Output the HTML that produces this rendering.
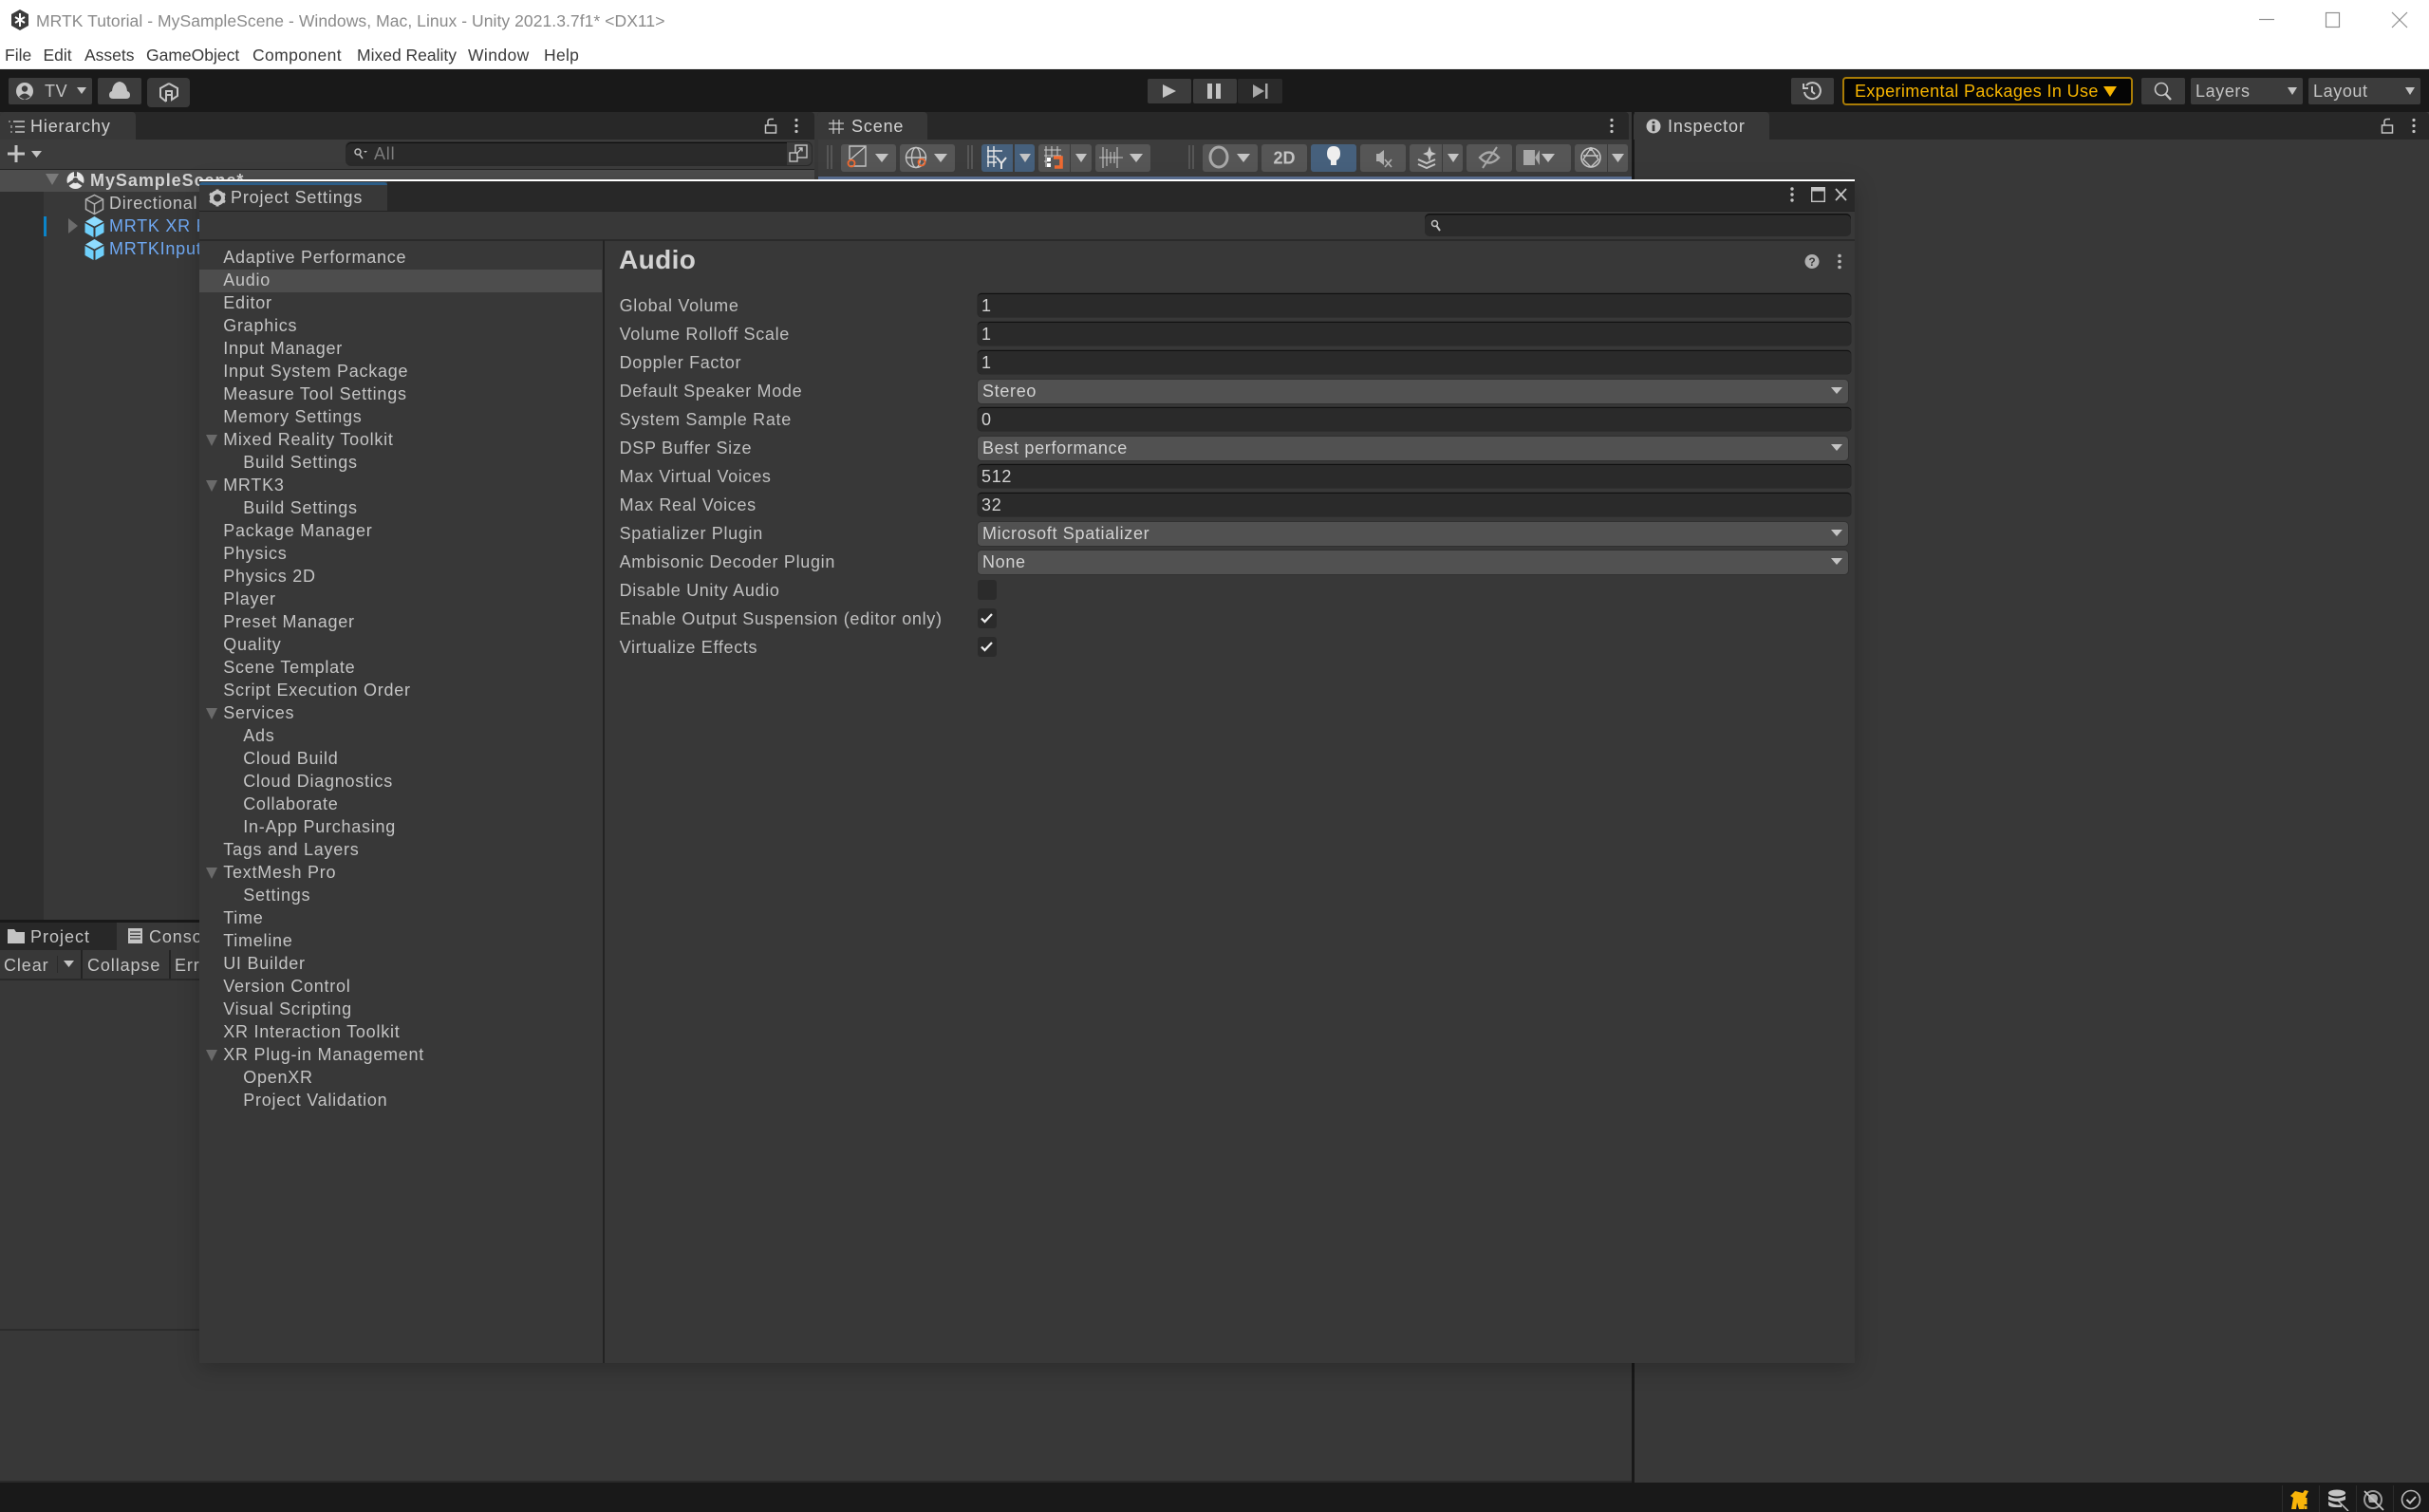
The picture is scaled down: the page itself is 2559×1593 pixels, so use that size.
<!DOCTYPE html>
<html><head><meta charset="utf-8"><title>Unity</title>
<style>
html,body{margin:0;padding:0;background:#383838}
#r{position:relative;width:2559px;height:1593px;overflow:hidden;background:#383838;font-family:"Liberation Sans",sans-serif;font-size:18px;color:#c4c4c4}
#r div,#r svg{position:absolute}
.t{white-space:nowrap;line-height:24px;letter-spacing:.75px}
.m{white-space:nowrap;line-height:24px;color:#3a3a3a;font-size:17.5px;top:46px}
.b{background:#3c3c3c;border-radius:2px;top:82px;height:28px}
.s{background:#565656;border-radius:3px;top:152px;height:29px}
.u{background:#46607c}
.g{top:153px;width:2px;height:25px;background:#565656;box-shadow:4px 0 0 #565656}
.i{left:235.2px}.c{left:256.2px}
.f{left:1030px;width:920px;height:25px;background:#2a2a2a;border-top:1.5px solid #111;border-radius:4px;box-sizing:border-box;box-shadow:0 0 0 .5px #262626}
.d{left:1030px;width:917px;height:25px;background:#515151;border-radius:4px;box-shadow:0 0 0 1px #303030}
.v{left:1034px;color:#d2d2d2;letter-spacing:.68px}
.l{left:652.6px;color:#c0c0c0;letter-spacing:.68px}
.k{left:1030px;width:20px;height:21px;background:#2b2b2b;border-radius:3px}
</style></head><body>
<div id="r">
<!-- title bar -->
<div style="left:0;top:0;width:2559px;height:72px;background:#fff"></div>
<div style="left:0;top:72px;width:2559px;height:1px;background:#f0f0f0"></div>
<svg style="left:10px;top:9px" width="22" height="24" viewBox="0 0 22 24"><path d="M11 1L20 6V18L11 23L2 18V6Z" fill="#3c3c3c"/><path d="M11 5V19M6 9L16 15M16 9L6 15" stroke="#fff" stroke-width="2"/></svg>
<div class="t" style="left:38px;top:10px;color:#8a8a8a;font-size:17.5px;letter-spacing:.06px">MRTK Tutorial - MySampleScene - Windows, Mac, Linux - Unity 2021.3.7f1* &lt;DX11&gt;</div>
<div class="m" style="left:5px">File</div><div class="m" style="left:45.5px">Edit</div><div class="m" style="left:89px">Assets</div><div class="m" style="left:154px">GameObject</div><div class="m" style="left:266px;letter-spacing:.4px">Component</div><div class="m" style="left:376px">Mixed Reality</div><div class="m" style="left:493px;letter-spacing:.4px">Window</div><div class="m" style="left:573px;letter-spacing:.3px">Help</div>
<svg style="left:2370px;top:8px" width="175" height="26" viewBox="0 0 175 26" fill="none" stroke="#8f8f8f" stroke-width="1.2"><path d="M10 12.5H26"/><rect x="80.5" y="5.5" width="14" height="15"/><path d="M150 5L166 21M166 5L150 21"/></svg>
<!-- main toolbar -->
<div style="left:0;top:73px;width:2559px;height:45px;background:#191919"></div>
<div class="b" style="left:9px;width:88px"></div>
<svg style="left:16px;top:86px" width="80" height="20" viewBox="0 0 80 20"><circle cx="10" cy="10" r="9" fill="#c4c4c4"/><circle cx="10" cy="7.5" r="3.2" fill="#3c3c3c"/><path d="M4 16Q10 9 16 16L10 19Z" fill="#3c3c3c"/><path d="M65 6H75L70 13Z" fill="#c4c4c4"/></svg>
<div class="t" style="left:47px;top:84px;color:#c4c4c4;letter-spacing:.6px">TV</div>
<div class="b" style="left:103px;width:46px"></div>
<svg style="left:114px;top:85px" width="24" height="20" viewBox="0 0 24 20"><path d="M5 19Q1 19 1 15Q1 12 4 11Q5 2 12 1Q19 2 20 11Q23 12 23 15Q23 19 19 19Z" fill="#c4c4c4"/></svg>
<div class="b" style="left:155px;width:45px;height:31px;border-radius:4px;background:#3a3a3a"></div>
<svg style="left:167px;top:86px" width="22" height="24" viewBox="0 0 22 24" fill="none" stroke="#c4c4c4" stroke-width="2"><path d="M11 2L20 7V15L14 19V13M8 21L2 16V7L11 2"/><path d="M8 21V10H14V14H8"/></svg>
<div class="b" style="left:1209px;width:46px;top:83px;height:26px"></div>
<div class="b" style="left:1257px;width:46px;top:83px;height:26px"></div>
<div class="b" style="left:1304px;width:47px;top:83px;height:26px;background:#2a2a2a"></div>
<svg style="left:1220px;top:86px" width="125" height="20" viewBox="0 0 125 20" fill="#c4c4c4"><path d="M5 3L19 10L5 17Z"/><rect x="52" y="2" width="5" height="16"/><rect x="61" y="2" width="5" height="16"/><path d="M100 3L112 10L100 17Z" fill="#a8a8a8"/><rect x="113" y="2" width="2.5" height="16" fill="#a8a8a8"/></svg>
<div class="b" style="left:1887px;width:45px"></div>
<svg style="left:1898px;top:85px" width="22" height="22" viewBox="0 0 22 22" fill="none" stroke="#c4c4c4" stroke-width="2"><path d="M5 5A8.5 8.5 0 1 1 3 12"/><path d="M2 3V8H7" /><path d="M11 6V11.5L14 14"/></svg>
<div style="left:1941px;top:81px;width:306px;height:30px;box-sizing:border-box;background:#050505;border:2px solid #a97c06;border-radius:4px"></div>
<div class="t" style="left:1954px;top:84px;color:#f7b500;letter-spacing:.38px">Experimental Packages In Use</div>
<svg style="left:2216px;top:91px" width="14" height="11" viewBox="0 0 14 11"><path d="M0 0H14L7 11Z" fill="#f7b500"/></svg>
<div class="b" style="left:2256px;width:46px"></div>
<svg style="left:2268px;top:85px" width="22" height="22" viewBox="0 0 22 22" fill="none" stroke="#c4c4c4" stroke-width="1.6"><circle cx="9" cy="9" r="6.5"/><path d="M13.5 14L19 20" stroke-width="2.4"/></svg>
<div class="b" style="left:2308px;width:118px"></div>
<div class="b" style="left:2432px;width:118px"></div>
<div class="t" style="left:2313px;top:84px;letter-spacing:.6px">Layers</div>
<div class="t" style="left:2437px;top:84px;letter-spacing:.6px">Layout</div>
<svg style="left:2409px;top:92px" width="12" height="9"><path d="M1 0H11L6 8Z" fill="#c4c4c4"/></svg>
<svg style="left:2533px;top:92px" width="12" height="9"><path d="M1 0H11L6 8Z" fill="#c4c4c4"/></svg>

<!-- hierarchy -->
<div style="left:0;top:118px;width:858px;height:29px;background:#282828;border-radius:4px 4px 0 0"></div>
<div style="left:0;top:118px;width:143px;height:29px;background:#383838;border-radius:4px 4px 0 0"></div>
<svg style="left:9px;top:126px" width="18" height="15" viewBox="0 0 18 15" fill="none" stroke="#c4c4c4" stroke-width="1.5"><path d="M5 2H17M7 7.5H17M7 13H17"/><path d="M1 1V3M3 6V9M3 12V14" stroke="#999"/></svg>
<div class="t" style="left:32px;top:121px;letter-spacing:.85px;color:#d2d2d2">Hierarchy</div>
<svg style="left:805px;top:124px" width="40" height="17" viewBox="0 0 40 17" fill="#c4c4c4"><rect x="1.5" y="8" width="11" height="8" fill="none" stroke="#c4c4c4" stroke-width="1.5"/><path d="M4 8V4Q4 1.5 7 1.5H10" fill="none" stroke="#c4c4c4" stroke-width="1.5"/><circle cx="34" cy="2.5" r="1.6"/><circle cx="34" cy="8.5" r="1.6"/><circle cx="34" cy="14.5" r="1.6"/></svg>
<div style="left:0;top:147px;width:858px;height:32px;background:#3c3c3c"></div>
<svg style="left:7px;top:152px" width="38" height="20" viewBox="0 0 38 20"><path d="M10 1V19M1 10H19" stroke="#c4c4c4" stroke-width="3"/><path d="M26 7H37L31.5 14Z" fill="#c4c4c4"/></svg>
<div style="left:365px;top:150px;width:490px;height:24px;background:#2a2a2a;border-radius:5px;box-shadow:inset 0 1px 0 #111,0 0 0 1px #2a2a2a"></div>
<svg style="left:372px;top:155px" width="16" height="14" viewBox="0 0 16 14" fill="none" stroke="#bbb" stroke-width="1.5"><circle cx="5" cy="5" r="3"/><path d="M7 8L10 12"/><path d="M11 4H15L13 6Z" fill="#bbb" stroke="none"/></svg>
<div class="t" style="left:394px;top:150px;color:#7c7c7c;letter-spacing:.8px">All</div>
<div style="left:829px;top:150px;width:26px;height:24px;background:#3c3c3c;border-radius:0 5px 5px 0"></div>
<svg style="left:831px;top:152px" width="20" height="19" viewBox="0 0 20 19" fill="none" stroke="#c4c4c4" stroke-width="1.4"><rect x="7" y="1" width="12" height="13"/><rect x="1" y="9" width="8" height="9" fill="#3c3c3c"/><path d="M8 10L14 4M10.5 4H14V7.5"/></svg>
<div style="left:0;top:178px;width:858px;height:1px;background:#242424"></div>
<div style="left:0;top:179px;width:858px;height:23px;background:#4d4d4d"></div>
<div style="left:0;top:202px;width:46px;height:767px;background:#2f2f2f"></div>
<svg style="left:48px;top:183px" width="14" height="12"><path d="M0 0H14L7 12Z" fill="#7a7a7a"/></svg>
<svg style="left:70px;top:180px" width="19" height="20" viewBox="0 0 19 20"><circle cx="9.5" cy="10" r="9" fill="#e6e6e6"/><path d="M9.5 0V6M1 15L7 11M18 15L12 11" stroke="#4d4d4d" stroke-width="3"/><circle cx="9.5" cy="10" r="3" fill="#4d4d4d"/></svg>
<div class="t" style="left:95px;top:178px;font-weight:bold;color:#d2d2d2;letter-spacing:.95px">MySampleScene*</div>
<svg style="left:89px;top:204px" width="21" height="23" viewBox="0 0 21 23" fill="none" stroke="#b0b0b0" stroke-width="1.5"><path d="M10.5 1.5L19.5 6V16.5L10.5 21.5L1.5 16.5V6Z"/><path d="M1.5 6L10.5 11L19.5 6M10.5 11V21.5"/></svg>
<div class="t" style="left:115px;top:202px;color:#c4c4c4">Directional</div>
<div style="left:46px;top:228px;width:2.5px;height:21px;background:#0b84c8"></div>
<svg style="left:72px;top:230px" width="10" height="16"><path d="M0 0L10 8L0 16Z" fill="#6c6c6c"/></svg>
<svg style="left:89px;top:228px" width="21" height="22" viewBox="0 0 21 22"><path d="M10.5 0L20 5.5L10.5 10.5L1 5.5Z" fill="#8edcff"/><path d="M0.5 7L9.5 12V22L0.5 17Z" fill="#6fd0fb"/><path d="M20.5 7L11.5 12V22L20.5 17Z" fill="#6fd0fb"/></svg>
<div class="t" style="left:115px;top:226px;color:#6fa8f2">MRTK XR R</div>
<svg style="left:89px;top:252px" width="21" height="22" viewBox="0 0 21 22"><path d="M10.5 0L20 5.5L10.5 10.5L1 5.5Z" fill="#8edcff"/><path d="M0.5 7L9.5 12V22L0.5 17Z" fill="#6fd0fb"/><path d="M20.5 7L11.5 12V22L20.5 17Z" fill="#6fd0fb"/></svg>
<div class="t" style="left:115px;top:250px;color:#6fa8f2">MRTKInput</div>

<!-- scene -->
<div style="left:861px;top:118px;width:855px;height:29px;background:#282828;border-radius:4px 4px 0 0"></div>
<div style="left:861px;top:118px;width:116px;height:29px;background:#383838;border-radius:4px 4px 0 0"></div>
<svg style="left:873px;top:126px" width="16" height="15" viewBox="0 0 16 15" stroke="#c4c4c4" stroke-width="1.3"><path d="M5 0V15M11 0V15M0 4H16M0 10H16"/></svg>
<div class="t" style="left:897px;top:121px;letter-spacing:.85px;color:#d2d2d2">Scene</div>
<svg style="left:1695px;top:124px" width="6" height="17" fill="#c4c4c4"><circle cx="3" cy="2.5" r="1.6"/><circle cx="3" cy="8.5" r="1.6"/><circle cx="3" cy="14.5" r="1.6"/></svg>
<div style="left:862px;top:147px;width:857px;height:39px;background:#3c3c3c"></div>
<div style="left:862px;top:186px;width:857px;height:3px;background:#5d7295"></div>
<div class="g" style="left:871px"></div><div class="g" style="left:1019px"></div><div class="g" style="left:1252px"></div>
<div class="s" style="left:886px;width:58px"></div>
<div class="s" style="left:948px;width:58px"></div>
<div class="s u" style="left:1034px;width:33px;border-radius:3px 0 0 3px"></div>
<div class="s u" style="left:1069px;width:21px;border-radius:0 3px 3px 0"></div>
<div class="s" style="left:1094px;width:33px;border-radius:3px 0 0 3px"></div>
<div class="s" style="left:1128px;width:22px;border-radius:0 3px 3px 0"></div>
<div class="s" style="left:1154px;width:58px"></div>
<div class="s" style="left:1267px;width:58px"></div>
<div class="s" style="left:1329px;width:48px"></div>
<div class="s u" style="left:1381px;width:48px"></div>
<div class="s" style="left:1433px;width:48px"></div>
<div class="s" style="left:1485px;width:34px;border-radius:3px 0 0 3px"></div>
<div class="s" style="left:1520px;width:21px;border-radius:0 3px 3px 0"></div>
<div class="s" style="left:1545px;width:48px"></div>
<div class="s" style="left:1597px;width:58px"></div>
<div class="s" style="left:1659px;width:34px;border-radius:3px 0 0 3px"></div>
<div class="s" style="left:1694px;width:21px;border-radius:0 3px 3px 0"></div>
<svg style="left:862px;top:147px" width="857" height="39" viewBox="862 147 857 39">
<g fill="#c4c4c4"><path d="M922 162H936L929 171Z"/><path d="M984 162H998L991 171Z"/><path d="M1074 162H1086L1080 171Z"/><path d="M1133 162H1145L1139 171Z"/><path d="M1190 162H1204L1197 171Z"/><path d="M1303 162H1317L1310 171Z"/><path d="M1624 162H1638L1631 171Z" /><path d="M1525 162H1537L1531 171Z"/><path d="M1698 162H1711L1704.5 171Z"/></g>
<g fill="none" stroke="#c4c4c4" stroke-width="1.4"><path d="M896 175H912V154H895V168M896 168L911 155"/><circle cx="965" cy="166" r="10.5"/><ellipse cx="965" cy="166" rx="4.5" ry="10.5"/><path d="M955 166H975"/></g>
<g fill="none" stroke="#ef6a31" stroke-width="1.8"><circle cx="897" cy="172" r="3.5"/><circle cx="971" cy="171" r="3.5"/></g>
<g stroke="#e6e6e6" stroke-width="1.4" fill="none"><path d="M1041 154V176M1047 154V176M1040 159H1056M1040 165H1050M1040 171H1050"/><path d="M1050 166L1055 172L1060 166M1055 172V178" stroke-width="2"/></g>
<g stroke="#c4c4c4" stroke-width="1.1" fill="none"><path d="M1102 154V176M1108 154V166M1114 154V166M1100 158H1118M1100 164H1118M1100 170H1106"/><path d="M1162 155V177M1177 155V177M1166 157V175M1170 160V172M1174 160V172M1158 166H1183M1162 160V172" /></g>
<g><rect x="1103" y="166" width="4" height="4" fill="#fff"/><rect x="1103" y="172" width="4" height="4" fill="#fff"/><path d="M1110 166H1118V176H1111" fill="none" stroke="#ef6a31" stroke-width="3.6"/></g>
<ellipse cx="1284" cy="165.500" rx="9" ry="10.500" fill="none" stroke="#a8a8a8" stroke-width="3"/>
<text x="1353" y="172.5" text-anchor="middle" font-family="Liberation Sans" font-weight="bold" font-size="18" fill="#c4c4c4">2D</text>
<path d="M1405 154Q1412 154 1412 162Q1412 167 1408 169V174H1402V169Q1398 167 1398 162Q1398 154 1405 154Z" fill="#eee"/>
<path d="M1450 162H1453V170H1450ZM1453 162L1458 158V174L1453 170Z" fill="#b0b0b0"/><path d="M1459 168L1466 176M1466 168L1459 176" stroke="#b0b0b0" stroke-width="1.6"/>
<path d="M1494 168L1503 172L1512 168M1494 173L1503 177L1512 173" fill="none" stroke="#c4c4c4" stroke-width="2"/><path d="M1506 154L1508 160L1513 162L1508 164L1506 170L1504 164L1499 162L1504 160Z" fill="#c4c4c4"/>
<path d="M1559 166Q1569 155 1579 166Q1569 177 1559 166Z" fill="none" stroke="#a8a8a8" stroke-width="2.4"/><path d="M1562 177L1577 155" stroke="#a8a8a8" stroke-width="2"/>
<rect x="1605" y="158" width="12" height="16" fill="#a8a8a8"/><path d="M1617 166L1622 158V174Z" fill="#a8a8a8"/>
<circle cx="1676" cy="166" r="10" fill="none" stroke="#c4c4c4" stroke-width="1.6"/><path d="M1676 156L1668 168L1676 176L1684 168ZM1668 164H1684" fill="none" stroke="#c4c4c4" stroke-width="1.4"/><circle cx="1676" cy="157" r="2" fill="#c4c4c4"/>
</svg>

<!-- inspector -->
<div style="left:1719px;top:118px;width:3px;height:1444px;background:#191919"></div>
<div style="left:1722px;top:118px;width:837px;height:29px;background:#282828;border-radius:4px 4px 0 0"></div>
<div style="left:1721px;top:118px;width:143px;height:29px;background:#383838;border-radius:4px 4px 0 0"></div>
<svg style="left:1734px;top:125px" width="16" height="16" viewBox="0 0 16 16"><circle cx="8" cy="8" r="7.5" fill="#c4c4c4"/><rect x="6.6" y="2.8" width="2.8" height="2.4" fill="#383838"/><rect x="6.6" y="6.6" width="2.8" height="6.6" fill="#383838"/></svg>
<div class="t" style="left:1757px;top:121px;letter-spacing:.85px;color:#d2d2d2">Inspector</div>
<svg style="left:2508px;top:124px" width="40" height="17" viewBox="0 0 40 17" fill="#c4c4c4"><rect x="1.5" y="8" width="11" height="8" fill="none" stroke="#c4c4c4" stroke-width="1.5"/><path d="M4 8V4Q4 1.5 7 1.5H10" fill="none" stroke="#c4c4c4" stroke-width="1.5"/><circle cx="35" cy="2.5" r="1.6"/><circle cx="35" cy="8.5" r="1.6"/><circle cx="35" cy="14.5" r="1.6"/></svg>

<!-- project/console -->
<div style="left:0;top:969px;width:1719px;height:3px;background:#191919"></div>
<div style="left:0;top:972px;width:123px;height:29px;background:#282828"></div>
<div style="left:123px;top:972px;width:120px;height:29px;background:#383838;border-radius:4px 4px 0 0"></div>
<svg style="left:8px;top:979px" width="18" height="15"><path d="M0 0H7L9 3H18V15H0Z" fill="#c4c4c4"/></svg>
<div class="t" style="left:32px;top:975px;letter-spacing:1px">Project</div>
<svg style="left:135px;top:978px" width="15" height="16" fill="#c4c4c4"><rect width="15" height="16"/><path d="M2 4H13M2 7.5H13M2 11H13" stroke="#383838" stroke-width="1.2"/></svg>
<div class="t" style="left:157px;top:975px;letter-spacing:.9px">Console</div>
<div style="left:0;top:1031px;width:1719px;height:1.5px;background:#2a2a2a"></div>
<div class="t" style="left:4px;top:1005px;letter-spacing:.9px">Clear</div>
<div style="left:60px;top:1007px;width:1px;height:18px;background:#2a2a2a"></div>
<svg style="left:67px;top:1012px" width="11" height="8"><path d="M0 0H11L5.5 7Z" fill="#c4c4c4"/></svg>
<div style="left:85px;top:1001px;width:2px;height:30px;background:#232323"></div>
<div class="t" style="left:92px;top:1005px;letter-spacing:.9px">Collapse</div>
<div style="left:178px;top:1001px;width:2px;height:30px;background:#232323"></div>
<div class="t" style="left:184px;top:1005px;letter-spacing:.9px">Errors</div>
<div style="left:0;top:1400px;width:1719px;height:1.5px;background:#2c2c2c"></div>
<div style="left:0;top:1560px;width:1719px;height:1.5px;background:#2a2a2a"></div>

<!-- status bar -->
<div style="left:0;top:1562px;width:2559px;height:31px;background:#191919"></div>
<div style="left:2404px;top:1565px;width:1px;height:28px;background:#2c2c2c;box-shadow:39px 0 0 #2c2c2c,78px 0 0 #2c2c2c,117px 0 0 #2c2c2c"></div>
<svg style="left:2410px;top:1568px" width="145" height="24" viewBox="0 0 145 24">
<path d="M4 22L6 10L3 8L8 3L16 5L18 2L22 3L19 9L17 22H12L10 15L9 22Z" fill="#f9b50a"/><rect x="17.5" y="10" width="3" height="7" fill="#f9b50a"/><rect x="17.5" y="18.5" width="3" height="3.5" fill="#f9b50a"/>
<ellipse cx="52" cy="5" rx="9" ry="3.5" fill="#c4c4c4"/><path d="M43 8Q52 13 61 8V12Q52 16 43 12ZM43 14Q52 19 57 17V20H52Q43 20 43 17Z" fill="#c4c4c4"/><path d="M52 12L64 24" stroke="#c4c4c4" stroke-width="1.5"/>
<circle cx="90" cy="12" r="9" fill="none" stroke="#9a9a9a" stroke-width="2"/><path d="M90 6Q95 6 95 11L94 15H86L85 11Q85 6 90 6Z" fill="#aaa"/><path d="M81 3L101 23" stroke="#c4c4c4" stroke-width="1.8"/>
<circle cx="130" cy="12" r="9.5" fill="none" stroke="#b8b8b8" stroke-width="1.6"/><path d="M125.500 12L129 15.500L135 9" fill="none" stroke="#c4c4c4" stroke-width="2"/>
</svg>

<!-- project settings window -->
<div style="left:210px;top:189px;width:1744px;height:1247px;background:#383838;box-shadow:0 6px 22px rgba(0,0,0,.22)"></div>
<div style="left:210px;top:189px;width:1744px;height:1.5px;background:#fff"></div>
<div style="left:210px;top:190.500px;width:1744px;height:31.500px;background:#282828"></div>
<div style="left:210px;top:190.500px;width:198px;height:31.500px;background:#383838"></div>
<div style="left:210px;top:192px;width:198px;height:3px;background:#2c5d87;border-radius:3px 3px 0 0"></div>
<svg style="left:220px;top:199px" width="18" height="19" viewBox="0 0 18 19"><circle cx="9" cy="9.500" r="6" fill="none" stroke="#c4c4c4" stroke-width="4"/><path d="M9 0.500V4M9 15V18.500M1 5L4 7M14 12L17 14M1 14L4 12M14 7L17 5" stroke="#c4c4c4" stroke-width="3"/></svg>
<div class="t" style="left:243px;top:196px;letter-spacing:.82px;color:#c8c8c8">Project Settings</div>
<svg style="left:1884px;top:196px" width="64" height="18" viewBox="0 0 64 18"><g fill="#c4c4c4"><circle cx="4" cy="3" r="1.700"/><circle cx="4" cy="9" r="1.700"/><circle cx="4" cy="15" r="1.700"/><rect x="24" y="1" width="15" height="4.500"/></g><rect x="24.700" y="1.700" width="13.600" height="14.600" fill="none" stroke="#c4c4c4" stroke-width="1.400"/><path d="M50 3L61 15M61 3L50 15" stroke="#c4c4c4" stroke-width="1.800"/></svg>
<div style="left:210px;top:221.500px;width:1744px;height:1px;background:#232323"></div>
<div style="left:1501px;top:225px;width:449px;height:24px;background:#2a2a2a;border-radius:5px;box-shadow:inset 0 1.500px 0 #111"></div>
<svg style="left:1507px;top:231px" width="12" height="13" viewBox="0 0 12 13" fill="none" stroke="#c4c4c4" stroke-width="1.500"><circle cx="4.500" cy="4.500" r="3"/><path d="M6.500 7L10 12" stroke-width="2"/></svg>
<div style="left:210px;top:252px;width:1744px;height:1.500px;background:#2a2a2a"></div>
<div style="left:635px;top:253px;width:2px;height:1183px;background:#232323"></div>
<div style="left:210px;top:283.500px;width:424px;height:24.500px;background:#4d4d4d"></div>

<div class="t i" style="top:259px">Adaptive Performance</div>
<div class="t i" style="top:283px">Audio</div>
<div class="t i" style="top:307px">Editor</div>
<div class="t i" style="top:331px">Graphics</div>
<div class="t i" style="top:355px">Input Manager</div>
<div class="t i" style="top:379px">Input System Package</div>
<div class="t i" style="top:403px">Measure Tool Settings</div>
<div class="t i" style="top:427px">Memory Settings</div>
<div class="t i" style="top:451px">Mixed Reality Toolkit</div>
<div class="t c" style="top:475px">Build Settings</div>
<div class="t i" style="top:499px">MRTK3</div>
<div class="t c" style="top:523px">Build Settings</div>
<div class="t i" style="top:547px">Package Manager</div>
<div class="t i" style="top:571px">Physics</div>
<div class="t i" style="top:595px">Physics 2D</div>
<div class="t i" style="top:619px">Player</div>
<div class="t i" style="top:643px">Preset Manager</div>
<div class="t i" style="top:667px">Quality</div>
<div class="t i" style="top:691px">Scene Template</div>
<div class="t i" style="top:715px">Script Execution Order</div>
<div class="t i" style="top:739px">Services</div>
<div class="t c" style="top:763px">Ads</div>
<div class="t c" style="top:787px">Cloud Build</div>
<div class="t c" style="top:811px">Cloud Diagnostics</div>
<div class="t c" style="top:835px">Collaborate</div>
<div class="t c" style="top:859px">In-App Purchasing</div>
<div class="t i" style="top:883px">Tags and Layers</div>
<div class="t i" style="top:907px">TextMesh Pro</div>
<div class="t c" style="top:931px">Settings</div>
<div class="t i" style="top:955px">Time</div>
<div class="t i" style="top:979px">Timeline</div>
<div class="t i" style="top:1003px">UI Builder</div>
<div class="t i" style="top:1027px">Version Control</div>
<div class="t i" style="top:1051px">Visual Scripting</div>
<div class="t i" style="top:1075px">XR Interaction Toolkit</div>
<div class="t i" style="top:1099px">XR Plug-in Management</div>
<div class="t c" style="top:1123px">OpenXR</div>
<div class="t c" style="top:1147px">Project Validation</div>
<svg style="left:216px;top:458px" width="14" height="680" fill="#6a6a6a"><path d="M1 0H13L7 12Z"/><path d="M1 48H13L7 60Z"/><path d="M1 288H13L7 300Z"/><path d="M1 456H13L7 468Z"/><path d="M1 648H13L7 660Z"/></svg>

<div style="left:652px;top:256px;font-size:28px;line-height:36px;font-weight:bold;color:#d2d2d2;letter-spacing:.4px;white-space:nowrap">Audio</div>
<svg style="left:1901px;top:267px" width="42" height="17" viewBox="0 0 42 17"><circle cx="8" cy="8.500" r="7.500" fill="#b0b0b0"/><text x="8" y="13" text-anchor="middle" font-family="Liberation Sans" font-weight="bold" font-size="12" fill="#383838">?</text><g fill="#b8b8b8"><circle cx="37" cy="2.500" r="1.800"/><circle cx="37" cy="8.500" r="1.800"/><circle cx="37" cy="14.500" r="1.800"/></g></svg>

<div class="t l" style="top:309.700px">Global Volume</div>
<div class="t l" style="top:339.700px">Volume Rolloff Scale</div>
<div class="t l" style="top:369.700px">Doppler Factor</div>
<div class="t l" style="top:399.700px">Default Speaker Mode</div>
<div class="t l" style="top:429.700px">System Sample Rate</div>
<div class="t l" style="top:459.700px">DSP Buffer Size</div>
<div class="t l" style="top:489.700px">Max Virtual Voices</div>
<div class="t l" style="top:519.700px">Max Real Voices</div>
<div class="t l" style="top:549.700px">Spatializer Plugin</div>
<div class="t l" style="top:579.700px">Ambisonic Decoder Plugin</div>
<div class="t l" style="top:609.700px">Disable Unity Audio</div>
<div class="t l" style="top:639.700px">Enable Output Suspension (editor only)</div>
<div class="t l" style="top:669.700px">Virtualize Effects</div>

<div class="f" style="top:309px"></div><div class="f" style="top:339px"></div><div class="f" style="top:369px"></div>
<div class="d" style="top:399.500px"></div>
<div class="f" style="top:429px"></div>
<div class="d" style="top:459.500px"></div>
<div class="f" style="top:489px"></div><div class="f" style="top:519px"></div>
<div class="d" style="top:549.500px"></div><div class="d" style="top:579.500px"></div>
<div class="t v" style="top:309.700px">1</div>
<div class="t v" style="top:339.700px">1</div>
<div class="t v" style="top:369.700px">1</div>
<div class="t v" style="top:399.700px;left:1035px">Stereo</div>
<div class="t v" style="top:429.700px">0</div>
<div class="t v" style="top:459.700px;left:1035px">Best performance</div>
<div class="t v" style="top:489.700px">512</div>
<div class="t v" style="top:519.700px">32</div>
<div class="t v" style="top:549.700px;left:1035px">Microsoft Spatializer</div>
<div class="t v" style="top:579.700px;left:1035px">None</div>
<svg style="left:1929px;top:408px" width="12" height="190" fill="#c4c4c4"><path d="M0 0H12L6 7Z"/><path d="M0 60H12L6 67Z"/><path d="M0 150H12L6 157Z"/><path d="M0 180H12L6 187Z"/></svg>
<div class="k" style="top:611px"></div>
<div class="k" style="top:641px"></div>
<div class="k" style="top:671px"></div>
<svg style="left:1033px;top:645px" width="13" height="12" viewBox="0 0 13 12" fill="none" stroke="#eee" stroke-width="2.200"><path d="M1 6.500L4.500 10L12 2"/></svg>
<svg style="left:1033px;top:675px" width="13" height="12" viewBox="0 0 13 12" fill="none" stroke="#eee" stroke-width="2.200"><path d="M1 6.500L4.500 10L12 2"/></svg>
</div>
</body></html>
